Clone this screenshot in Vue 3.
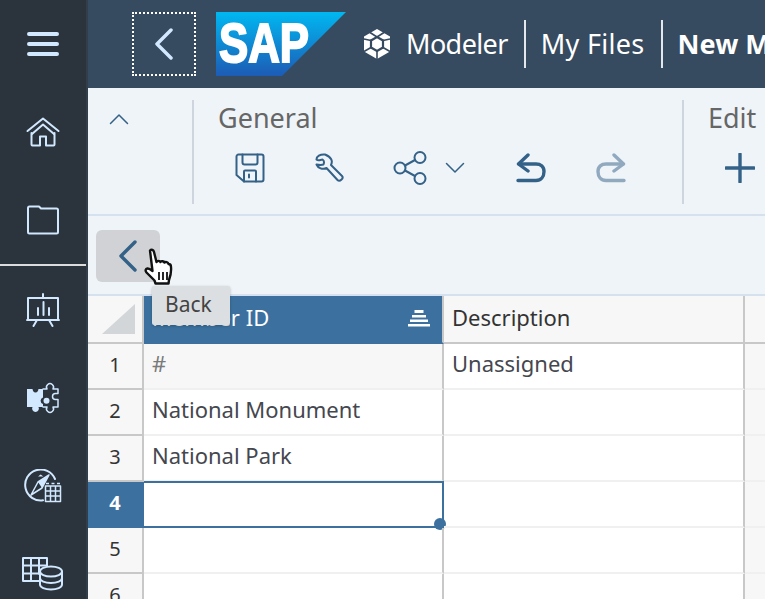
<template>
  <div class="app">
    <!-- left navigation -->
    <nav class="side">
      <button class="side-btn">
        <svg width="34" height="26" viewBox="0 0 34 26" class="ico-side">
          <path d="M3 3h28M3 13h28M3 23h28" stroke-width="4" />
        </svg>
      </button>
      <button class="side-btn">
        <svg width="34" height="30" viewBox="0 0 34 30" class="ico-side">
          <path d="M1.500 14 17 1.500 32.500 14" />
          <path d="M6 17 17 7.500 28 17" />
          <path d="M5.500 16v11.500a1 1 0 0 0 1 1h7.500v-9h6v9h7.500a1 1 0 0 0 1-1V16" />
        </svg>
      </button>
      <button class="side-btn">
        <svg width="34" height="30" viewBox="0 0 34 30" class="ico-side">
          <path d="M2 3a1.500 1.500 0 0 1 1.500-1.500H13L15 3.500H30.500A1.500 1.500 0 0 1 32 5v22a1.500 1.500 0 0 1-1.500 1.500h-27A1.500 1.500 0 0 1 2 27z" />
        </svg>
      </button>
      <div class="side-line"></div>
      <button class="side-btn">
        <svg width="34" height="34" viewBox="0 0 34 34" class="ico-side">
          <path d="M17 1v4M2 5h30v22H2zM1 27h32M11 27l-3.500 6M23 27l3.500 6M12 22v-7M17.500 22V9M23 22v-7" />
        </svg>
      </button>
      <button class="side-btn">
        <svg width="34" height="34" viewBox="0 0 34 34" class="ico-side fine">
          <path class="solid" d="M1 8h5.500c.5 2 1 3.500 3 3.500s2.500-1.500 3-3.500H17v8.500a3.400 3.400 0 0 0 0 6.500V26h-4.500a3.400 3.400 0 1 1-6 0H1z" />
          <path d="M17 8h4a3.500 3.500 0 1 1 6 0h5v4.500h-2.500a3 3 0 0 0 0 6H32V26h-5a3.500 3.500 0 1 1-6 0h-4" />
          <circle class="solid" cx="20.500" cy="19.700" r="3" />
        </svg>
      </button>
      <button class="side-btn">
        <svg width="38" height="34" viewBox="0 0 38 34" class="ico-side">
          <path d="M19 31.300A15.500 15.500 0 1 1 31 10" />
          <path d="M25 6 14 13l-7 13 11-7z" stroke-width="1.500" />
          <path class="solid" d="M25 6 14 13l4 6z" />
          <path class="solid" d="M14 7.500l2.700-2 2.700 2z" />
          <path class="fine-line" d="M21.500 17h15v15.500h-15zM21.500 22h15M21.500 27h15M26.500 17v15.500M31.500 17v15.500M22 14.500h3M27.500 14.500h3M33 14.500h3" />
        </svg>
      </button>
      <button class="side-btn">
        <svg width="42" height="34" viewBox="0 0 42 34" class="ico-side">
          <path d="M18 24H1V1h24v8M1 8.500h24M1 16.500h17M9 1v23M17 1v16" />
          <ellipse cx="29" cy="14.500" rx="11" ry="5" />
          <path d="M18 14.500v13c0 3 5 5 11 5s11-2 11-5v-13M18 21c0 3 5 5 11 5s11-2 11-5" />
        </svg>
      </button>
    </nav>

    <div class="main">
      <!-- shell header -->
      <header class="shell">
        <button class="shell-back">
          <svg width="20" height="32" viewBox="0 0 20 32" class="ico-side">
            <path d="M17 2 3 16l14 14" stroke-width="3.500" />
          </svg>
        </button>
        <svg class="sap" width="130" height="64" viewBox="0 0 130 64">
          <defs>
            <linearGradient id="sapg" x1="0" y1="0" x2="0" y2="1">
              <stop offset="0" stop-color="#00b8f1" />
              <stop offset="1" stop-color="#1d5bb5" />
            </linearGradient>
          </defs>
          <path d="M0 0h130L66 64H0z" fill="url(#sapg)" />
          <text x="3" y="50" class="sap-text" textLength="90" lengthAdjust="spacingAndGlyphs">SAP</text>
        </svg>
        <svg class="cube" width="28" height="30" viewBox="0 0 28 30">
          <path d="M14 0 27 7.500v15L14 30 1 22.500v-15z" fill="#fff" />
          <path d="M14 8l6 3.500v7L14 22l-6-3.500v-7z" fill="#fff" stroke="#364a60" stroke-width="2.200" />
          <path d="M7 3.500 14 8l7-4.500M8 18.500 1 22.500M20 18.500l7 4M14 22v8M1 10l7 1.500M27 10l-7 1.500" fill="none" stroke="#364a60" stroke-width="1.600" />
        </svg>
        <span class="crumb first">Modeler</span>
        <i class="crumb-sep"></i>
        <span class="crumb second">My Files</span>
        <i class="crumb-sep"></i>
        <span class="crumb strong">New Model</span>
      </header>

      <!-- toolbar -->
      <section class="toolbar">
        <div class="collapse">
          <svg width="20" height="12" viewBox="0 0 20 12" class="ico-tool thin">
            <path d="M1.500 10.500 10 2l8.500 8.500" />
          </svg>
        </div>
        <div class="group general">
          <div class="group-title">General</div>
          <div class="group-icons">
            <svg width="30" height="30" viewBox="0 0 30 30" class="ico-tool">
              <path d="M3.500 1.500h23a2 2 0 0 1 2 2v23a2 2 0 0 1-2 2H9l-7.500-6.500V3.500a2 2 0 0 1 2-2z" />
              <path d="M7.500 1.500v8a2 2 0 0 0 2 2h11a2 2 0 0 0 2-2v-8M9 28.500V18.500a1 1 0 0 1 1-1h10a1 1 0 0 1 1 1v10M14 21.500v3" />
            </svg>
            <svg width="30" height="30" viewBox="0 0 30 30" class="ico-tool wrench">
              <path d="M10 1.500C5 1 1.500 3.500 1.500 6.500c2 2 4 0 6 0 1.500 1 2 2.500 1 5-1.500.5-4 .5-7 0 1.500 3.500 6 5.500 10 3.500l11 12c1 1 2.500 1 4-.5s1.500-2.500.5-3.500L16 12c2-4 .5-8-6-10.500z" />
            </svg>
            <svg width="34" height="34" viewBox="0 0 34 34" class="ico-tool share">
              <circle cx="7" cy="17" r="5.500" />
              <circle cx="27" cy="6.500" r="5.500" />
              <circle cx="27" cy="27.500" r="5.500" />
              <path d="m12 14.500 10-5.500M12 19.500l10 5.500" />
            </svg>
            <svg width="20" height="12" viewBox="0 0 20 12" class="ico-tool thin chev">
              <path d="M1.500 1.500 10 10l8.500-8.500" />
            </svg>
            <svg width="30" height="30" viewBox="0 0 30 30" class="ico-tool bold undo">
              <path d="M12 2 2.500 11 12 18" />
              <path d="M3 11h17c4.500 0 8 2.500 8 7.500s-3 9-8 9H2" />
            </svg>
            <svg width="30" height="30" viewBox="0 0 30 30" class="ico-tool bold redo">
              <path d="M18 2l9.500 9L18 18" />
              <path d="M27 11H10c-4.500 0-8 2.500-8 7.500s3 9 8 9h18" />
            </svg>
          </div>
        </div>
        <div class="group">
          <div class="group-title">Edit</div>
          <div class="group-icons">
            <svg width="30" height="30" viewBox="0 0 30 30" class="ico-tool bold">
              <path d="M15 1v28M1 15h28" />
            </svg>
          </div>
        </div>
      </section>

      <!-- back bar -->
      <section class="backbar">
        <button class="back-btn">
          <svg width="20" height="32" viewBox="0 0 20 32" class="ico-tool bold">
            <path d="M17 2 3 16l14 14" />
          </svg>
        </button>
        <svg class="hand" width="32" height="40" viewBox="0 0 32 40">
          <path d="M7 2.500c1.500-1.500 3.500-.5 4 1.500l2.500 10c.5-1.500 3.500-1.500 4 0 .5-1 3.500-1 4 .5 1-.8 3.500-.5 4 1.500 1.500 0 2.500 1 2.500 3 .5 5-.5 9-2 13l-.5 3.500H12.500l-1-3-8-8c-1.500-2-1-3.500 1-4 1.500-.2 3 .8 5 2.500z" fill="#fff" stroke="#111" stroke-width="2.400" stroke-linejoin="round" />
          <path d="M16 24v8M20 24v8M24 24v8" stroke="#111" stroke-width="1.800" fill="none" />
        </svg>
        <div class="tip">Back</div>
      </section>

      <!-- grid -->
      <section class="sheet">
        <div class="row head">
          <div class="rh corner"><i class="tri"></i></div>
          <div class="cell c1 col-active">
            <span>Member ID</span>
            <svg class="sort" width="22" height="17" viewBox="0 0 22 17">
              <path d="M6.500 0h9v3h-9zM4 5h14v2.500H4zM2 9.500h18V12H2zM0 14h22v2.500H0z" fill="#fff" />
            </svg>
          </div>
          <div class="cell c2">Description</div>
          <div class="cell c3"></div>
        </div>
        <div v-for="row in rows" :key="row.n" class="row">
          <div class="rh" :class="{ sel: row.n === 4 }">{{ row.n }}</div>
          <div class="cell c1" :class="{ hash: row.n === 1, picked: row.n === 4 }">
            {{ row.id }}
            <i v-if="row.n === 4" class="handle"></i>
          </div>
          <div class="cell c2">{{ row.desc }}</div>
          <div class="cell c3"></div>
        </div>
      </section>
    </div>
  </div>
</template>

<script setup>
const rows = [
  { n: 1, id: '#', desc: 'Unassigned' },
  { n: 2, id: 'National Monument', desc: '' },
  { n: 3, id: 'National Park', desc: '' },
  { n: 4, id: '', desc: '' },
  { n: 5, id: '', desc: '' },
  { n: 6, id: '', desc: '' }
]
</script>

<style>
html, body { margin: 0; height: 100%; overflow: hidden; }
</style>

<style scoped>
.app {
  display: flex;
  width: 765px;
  height: 599px;
  overflow: hidden;
  font-family: "Noto Sans", "Open Sans", sans-serif;
}
button {
  border: 0;
  background: none;
  padding: 0;
  display: flex;
  align-items: center;
  justify-content: center;
}
.ico-side, .ico-tool {
  fill: none;
  stroke-linecap: round;
  stroke-linejoin: round;
}
.ico-side { stroke: #d1e8ff; stroke-width: 2; }
.ico-side.fine { stroke-width: 1.500; }
.ico-side .solid { fill: #d1e8ff; stroke: none; }
.ico-side .fine-line { stroke-width: 1.500; stroke-linecap: butt; }
.ico-tool { stroke: #346187; stroke-width: 2; flex: none; }
.ico-tool.thin { stroke-width: 1.500; }
.ico-tool.bold { stroke-width: 3.400; }

/* side nav */
.side {
  width: 86px;
  flex: none;
  background: #2b333d;
  border-right: 2px solid #333e4b;
  display: flex;
  flex-direction: column;
}
.side-btn { height: 88px; flex: none; }
.side-line { height: 2px; flex: none; background: #dcdcdc; }

.main {
  flex: 1;
  min-width: 0;
  display: flex;
  flex-direction: column;
}

/* shell */
.shell {
  height: 88px;
  flex: none;
  background: #364a60;
  display: flex;
  align-items: center;
  padding-left: 44px;
  white-space: nowrap;
  overflow: hidden;
}
.shell-back {
  width: 64px;
  height: 64px;
  flex: none;
  box-sizing: border-box;
  border: 2px dotted #fff;
}
.sap { flex: none; margin-left: 20px; }
.sap-text {
  font-family: "Liberation Sans", sans-serif;
  font-weight: 700;
  font-size: 55px;
  fill: #fff;
  stroke: #fff;
  stroke-width: 2;
}
.cube { flex: none; margin-left: 17px; }
.crumb {
  color: #fff;
  font-size: 27px;
  margin-left: 15px;
  padding-bottom: 2px;
}
.crumb.first { letter-spacing: -0.6px; }
.crumb.second { letter-spacing: 0.3px; }
.crumb-sep {
  width: 2px;
  height: 48px;
  flex: none;
  background: #e4e8ec;
  margin-left: 16px;
}
.crumb.strong { font-weight: 700; }

/* toolbar */
.toolbar {
  height: 128px;
  flex: none;
  box-sizing: border-box;
  background: #eff4f9;
  border-bottom: 2px solid #d5e1ef;
  display: flex;
  padding-top: 12px;
  white-space: nowrap;
}
.collapse {
  width: 106px;
  height: 104px;
  flex: none;
  box-sizing: border-box;
  padding: 13px 0 0 21px;
  border-right: 2px solid #ced5df;
}
.collapse svg { display: block; }
.group {
  height: 104px;
  flex: none;
  box-sizing: border-box;
  padding-left: 24px;
}
.group.general {
  width: 490px;
  border-right: 2px solid #ced5df;
}
.group-title {
  font-size: 27px;
  line-height: 36px;
  color: #666;
}
.group-icons {
  display: flex;
  align-items: center;
  height: 34px;
  margin-top: 15px;
  padding-left: 17px;
}
.wrench { margin-left: 50px; }
.share { margin-left: 48px; }
.chev { margin-left: 18px; }
.undo { margin-left: 51px; }
.redo { margin-left: 50px; opacity: 0.5; }

/* back bar */
.backbar {
  position: relative;
  height: 80px;
  flex: none;
  box-sizing: border-box;
  background: #eff4f9;
  border-bottom: 2px solid #d5e1ef;
  padding: 14px 0 0 8px;
}
.back-btn {
  width: 64px;
  height: 52px;
  background: #d0d2d5;
  border-radius: 6px;
}
.hand {
  position: absolute;
  left: 55px;
  top: 32px;
  z-index: 3;
}
.tip {
  position: absolute;
  left: 64px;
  top: 70px;
  z-index: 2;
  width: 78px;
  height: 39px;
  box-sizing: border-box;
  padding-left: 13px;
  line-height: 36px;
  font-size: 21px;
  color: #444;
  background: #dcdfe1;
  border-radius: 2px;
  box-shadow: 0 1px 3px rgba(0, 0, 0, 0.25);
}

/* sheet */
.sheet {
  flex: 1;
  min-height: 0;
  background: #fff;
}
.row {
  display: flex;
  height: 46px;
  box-sizing: border-box;
}
.row.head { height: 48px; }
.rh {
  width: 56px;
  flex: none;
  box-sizing: border-box;
  background: #f7f7f7;
  border-right: 2px solid #c8c8c8;
  border-bottom: 2px solid #c8c8c8;
  padding-bottom: 4px;
  display: flex;
  align-items: center;
  justify-content: center;
  font-size: 20px;
  color: #333;
}
.rh.sel {
  background: #3c719f;
  border-color: #3c719f;
  color: #fff;
  font-weight: 700;
}
.corner { position: relative; }
.tri {
  position: absolute;
  right: 7px;
  bottom: 8px;
  width: 0;
  height: 0;
  border-left: 33px solid transparent;
  border-bottom: 30px solid #d3d6d8;
}
.cell {
  box-sizing: border-box;
  border-right: 2px solid #c8c8c8;
  border-bottom: 2px solid #f0f0f0;
  padding-left: 8px;
  padding-bottom: 6px;
  display: flex;
  align-items: center;
  font-size: 22px;
  color: #45474f;
  white-space: nowrap;
  position: relative;
}
.c1 { width: 300px; flex: none; }
.c2 { width: 301px; flex: none; }
.c3 { flex: 1; background: #f7f7f7; border-right: 0; }
.head .cell {
  background: #f7f7f7;
  border-bottom-color: #c8c8c8;
  color: #333;
  padding-bottom: 4px;
}
.head .col-active {
  background: #3c719f;
  color: #fff;
  border-right-color: #c8c8c8;
  border-bottom-color: #3c719f;
}
.sort { margin-left: auto; margin-right: 12px; margin-top: 2px; }
.hash { background: #f7f7f7; color: #7a7a7a; }
.picked {
  border: 2px solid #3c719f;
  border-left: 0;
  margin-top: -1px;
  height: 47px;
}
.handle {
  position: absolute;
  right: -4px;
  bottom: -4px;
  width: 12px;
  height: 12px;
  border-radius: 50%;
  background: #3c719f;
}
</style>
